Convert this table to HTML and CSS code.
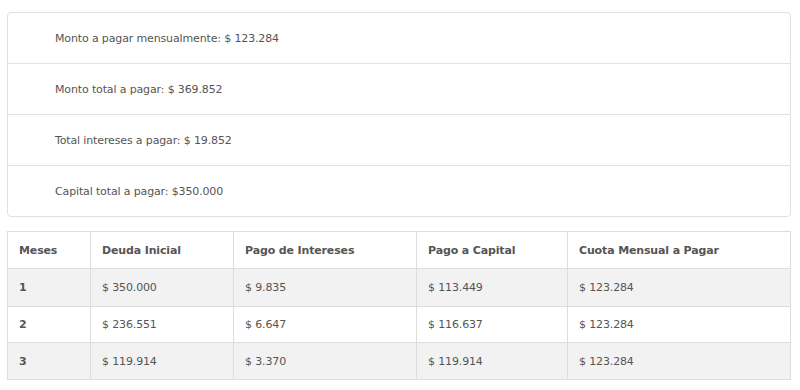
FILE: index.html
```html
<!DOCTYPE html>
<html lang="es">
<head>
<meta charset="utf-8">
<link rel="stylesheet" href="styles.css">
</head>
<body>
<ul class="summary">
  <li class="summary-item">Monto a pagar mensualmente: $ 123.284</li>
  <li class="summary-item">Monto total a pagar: $ 369.852</li>
  <li class="summary-item">Total intereses a pagar: $ 19.852</li>
  <li class="summary-item">Capital total a pagar: $350.000</li>
</ul>
<table class="plan">
  <thead>
    <tr><th class="c1">Meses</th><th class="c2">Deuda Inicial</th><th class="c3">Pago de Intereses</th><th class="c4">Pago a Capital</th><th class="c5">Cuota Mensual a Pagar</th></tr>
  </thead>
  <tbody>
    <tr><th>1</th><td>$ 350.000</td><td>$ 9.835</td><td>$ 113.449</td><td>$ 123.284</td></tr>
    <tr><th>2</th><td>$ 236.551</td><td>$ 6.647</td><td>$ 116.637</td><td>$ 123.284</td></tr>
    <tr><th>3</th><td>$ 119.914</td><td>$ 3.370</td><td>$ 119.914</td><td>$ 123.284</td></tr>
  </tbody>
</table>
</body>
</html>
```
FILE: styles.css
```css
html, body { background: #fff; }
body {
  margin: 12px 9px 8px 7px;
  font-family: "DejaVu Sans", Verdana, sans-serif;
  font-size: 11px;
  letter-spacing: -0.14px;
  color: #555;
}
.summary {
  list-style: none;
  margin: 0;
  padding: 0;
  border: 1px solid #e0e0e0;
  border-radius: 4px;
}
.summary-item {
  height: 50px;
  display: flex;
  align-items: center;
  padding-left: 47px;
  border-top: 1px solid #e2e2e2;
}
.summary-item:first-child { border-top: none; }
.plan {
  margin-top: 14px;
  width: 784px;
  border-collapse: collapse;
  border: 1px solid #ddd;
}
.plan th, .plan td {
  text-align: left;
  padding: 0 11px;
  height: 36px;
  border-left: 1px solid #ddd;
  border-top: 1px solid #ddd;
}
.plan th { font-weight: bold; }
.plan tbody tr:nth-child(1) td, .plan tbody tr:nth-child(1) th { height: 37px; }
.plan tbody tr:nth-child(2) td, .plan tbody tr:nth-child(2) th { height: 35px; }
.plan tbody tr:nth-child(odd) { background: #f2f2f2; }
.c1 { width: 60px; }
.c2 { width: 120px; }
.c3 { width: 160px; }
.c4 { width: 128px; }
```
